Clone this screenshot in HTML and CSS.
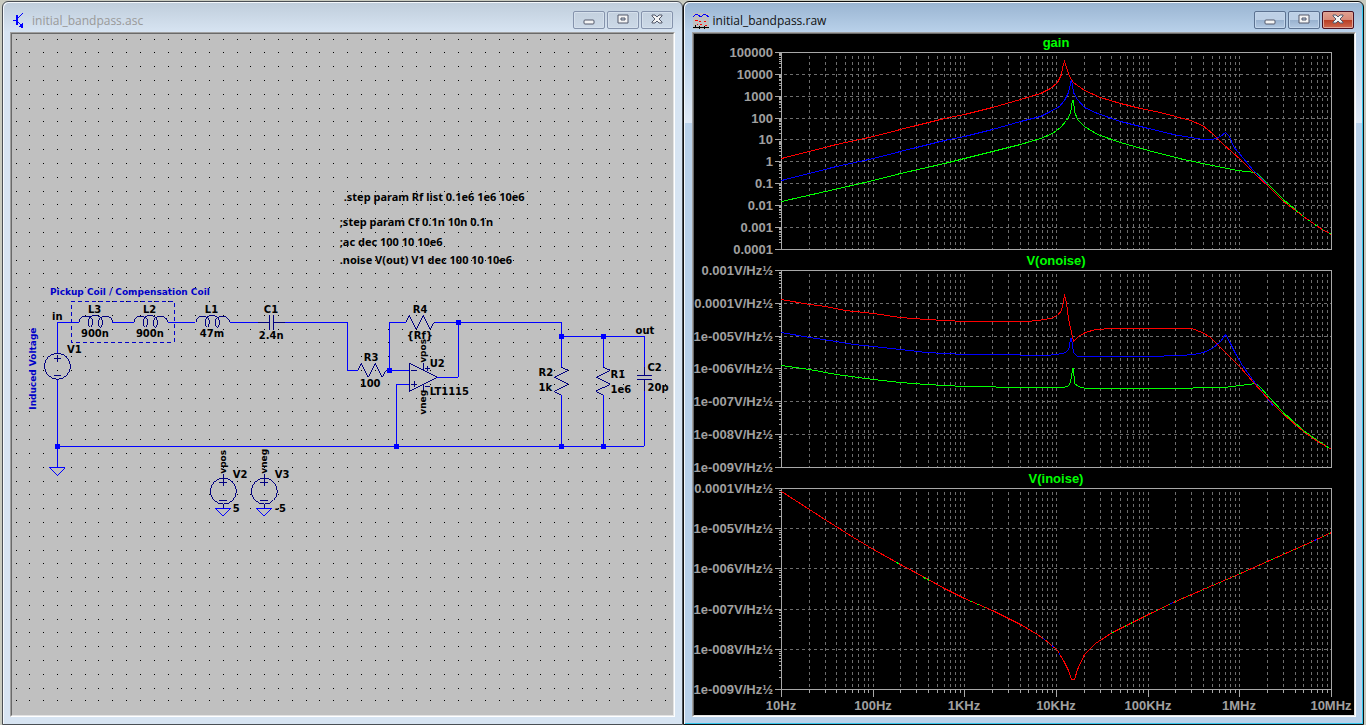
FILE: index.html
```html
<!DOCTYPE html>
<html lang="en">
<head>
  <meta charset="UTF-8" />
  <meta name="viewport" content="width=device-width, initial-scale=1.0" />
  <title>initial_bandpass</title>
  <link rel="stylesheet" href="styles.css">
</head>
<body>

  <section class="window">
    <header class="titlebar">
      <svg class="icon" width="16" height="16" viewBox="0 0 16 16">
        <path d="M1 7h4M6 5l5-5M6 9l5 5" stroke="#00f" fill="none" />
        <path d="M4 2h2v10h-2zM11 15v-5l-5 4z" fill="#00f" />
      </svg>
      <h1>initial_bandpass.asc</h1>
      <button type="button" aria-label="Minimize"><svg width="12" height="12" viewBox="0 0 12 12"><rect x="1" y="6" width="10" height="4" rx="1" /></svg></button>
      <button type="button" aria-label="Maximize"><svg width="12" height="12" viewBox="0 0 12 12"><path d="M1 1h10v8H1zM4 4v2h4V4z" /></svg></button>
      <button type="button" aria-label="Close"><svg width="12" height="12" viewBox="0 0 12 12"><path d="M1 1h3l2 2 2-2h3v1L8 5l3 3v1H8L6 7 4 9H1V8l3-3-3-3z" /></svg></button>
    </header>
    <main class="client">
      <svg class="schematic" viewBox="12 34 661 681" preserveAspectRatio="xMinYMin meet">
        <path id="dots" fill="#000" />

        <g transform="translate(.5 .5)">
          <g class="wire">
            <path d="M57 353V322H79M112 322H134M168 322H195M230 322H258M285 322H347V370H358" />
            <path d="M386 370H409M389 370V322H406M434 322H561V367M458 322V377H437" />
            <path d="M561 336H644V367M603 336V367M561 395V446M603 395V446M644 391V446" />
            <path d="M57 379V467M57 446H644M409 384H396V446" />
            <path d="M49 467H65L57 475ZM215 508H231L223 516ZM256 508H272L264 516Z" />
          </g>

          <g class="part">
            <!-- sources -->
            <circle cx="57" cy="366" r="13" />
            <circle cx="223" cy="491" r="13" />
            <circle cx="264" cy="491" r="13" />
            <path d="M54 358H61M57 355V362M54 375H61" />
            <path d="M219 482H227M223 478V486M219 500H227M223 474V478M223 504V508" />
            <path d="M260 482H268M264 478V486M260 500H268M264 474V478M264 504V508" />
            <!-- inductors -->
            <path id="coil" d="M79 322Q79 316 85 316Q92 316 92 321Q92 327 90 327Q88 327 88 322Q88 315 95 315Q102 316 102 322Q102 327 100 327Q98 327 98 322Q98 316 106 316Q112 317 112 322" />
            <use href="#coil" x="55" />
            <use href="#coil" x="117" />
            <!-- capacitors -->
            <path d="M258 322H269M269 315V330M273 315V330M273 322H285" />
            <path d="M644 367V375M637 375H652M637 379H652M644 379V391" />
            <!-- resistors -->
            <path d="M358 370L361 363L368 377L375 363L382 377L386 370" />
            <path d="M406 322L409 315L416 329L423 315L430 329L434 322" />
            <path d="M561 367L568 370L554 377L568 384L554 391L561 395" />
            <path d="M603 367L610 370L596 377L610 384L596 391L603 395" />
            <!-- op amp -->
            <path d="M409 363V391L437 377ZM411 370H417M411 384H417M414 381V387M423 363V370M423 384V391M425 368H430M427 366V371M425 386H430" />
          </g>
          <rect class="outline" x="71" y="301" width="103" height="41" />
        </g>

        <path class="node" d="M55 444h5v5h-5zM394 444h5v5h-5zM559 444h5v5h-5zM601 444h5v5h-5zM387 368h5v5h-5zM456 320h5v5h-5zM559 334h5v5h-5zM601 334h5v5h-5z" />

        <g class="label">
          <text x="52" y="320">in</text>
          <text x="88" y="313">L3</text>
          <text x="81" y="337">900n</text>
          <text x="143" y="313">L2</text>
          <text x="136" y="337">900n</text>
          <text x="205" y="313">L1</text>
          <text x="200" y="337">47m</text>
          <text x="264" y="313">C1</text>
          <text x="259" y="339">2.4n</text>
          <text x="67" y="353">V1</text>
          <text x="233" y="478">V2</text>
          <text x="275" y="478">V3</text>
          <text x="233" y="512">5</text>
          <text x="275" y="512">-5</text>
          <text x="413" y="313">R4</text>
          <text x="407" y="339">{Rf}</text>
          <text x="364" y="361">R3</text>
          <text x="360" y="387">100</text>
          <text x="430" y="367">U2</text>
          <text x="430" y="395">LT1115</text>
          <text x="539" y="376">R2</text>
          <text x="539" y="391">1k</text>
          <text x="611" y="378">R1</text>
          <text x="611" y="393">1e6</text>
          <text x="636" y="334">out</text>
          <text x="648" y="371">C2</text>
          <text x="648" y="391">20p</text>
        </g>
        <g class="directive">
          <text x="344" y="201">.step param Rf list 0.1e6 1e6 10e6</text>
          <text x="340" y="226">;step param Cf 0.1n 10n 0.1n</text>
          <text x="340" y="246">;ac dec 100 10 10e6</text>
          <text x="340" y="264">.noise V(out) V1 dec 100 10 10e6</text>
        </g>
        <g class="net">
          <text transform="translate(226 474) rotate(-90)">vpos</text>
          <text transform="translate(267 474) rotate(-90)">vneg</text>
          <text transform="translate(426 363) rotate(-90)">vpos</text>
          <text transform="translate(426 415) rotate(-90)">vneg</text>
        </g>
        <g class="net note">
          <text x="50" y="295">Pickup Coil / Compensation Coil</text>
          <text transform="translate(36 410) rotate(-90)">Induced Voltage</text>
        </g>
      </svg>
    </main>
  </section>

  <section class="window active">
    <header class="titlebar">
      <svg class="icon" width="16" height="16" viewBox="0 0 16 16">
        <rect width="16" height="16" fill="#c0c0c0" />
        <path d="M0 4l3-3h1l4 3 3-3h1l4 3" stroke="#00f" fill="none" />
        <path d="M2 7h3v1h-3zM6 8h2v1h-2zM11 8h2v1h-2zM7 11h2v1h-2zM4 11h1v1h-1zM12 12h2v1h-2z" fill="#f00" />
        <path d="M0 14h16v1h-16zM2 12h1v3h-1zM6 13h1v3h-1zM11 13h1v3h-1z" fill="#000" />
      </svg>
      <h1>initial_bandpass.raw</h1>
      <button type="button" aria-label="Minimize"><svg width="12" height="12" viewBox="0 0 12 12"><rect x="1" y="6" width="10" height="4" rx="1" /></svg></button>
      <button type="button" aria-label="Maximize"><svg width="12" height="12" viewBox="0 0 12 12"><path d="M1 1h10v8H1zM4 4v2h4V4z" /></svg></button>
      <button type="button" class="close" aria-label="Close"><svg width="12" height="12" viewBox="0 0 12 12"><path d="M1 1h3l2 2 2-2h3v1L8 5l3 3v1H8L6 7 4 9H1V8l3-3-3-3z" /></svg></button>
    </header>
    <main class="client">
      <svg class="plots" id="plots" viewBox="694 34 660 681" preserveAspectRatio="xMinYMin meet"></svg>
    </main>
  </section>

  <script src="script.js"></script>
</body>
</html>
```
FILE: styles.css
```css
* {
  box-sizing: border-box;
}
body {
  display: flex;
  height: 100vh;
  margin: 0;
  padding: 1px 2px 0;
  background: #c9cbc0;
  font-family: "Open Sans", "Noto Sans", sans-serif;
  overflow: hidden;
}

/* windows */
.window {
  flex: 1;
  min-width: 0;
  display: flex;
  flex-direction: column;
  padding: 1px 7px 7px;
  border: 1px solid #4a4f55;
  border-radius: 6px 6px 0 0;
  background: linear-gradient(#bfcddb, #d7e4f2 30px);
  box-shadow: inset 1px 1px #f4f8fc;
}
.window.active {
  padding-left: 8px;
  border-color: #111;
  background: linear-gradient(#99b4d1, #b9d1ea 30px, #b9d1ea 40px, #dfe9f6 121px, #b9d1ea 121px);
  box-shadow: inset 1px 1px #f4f8fc, inset -1px -1px #35c8ee;
}
.titlebar {
  display: flex;
  align-items: center;
  gap: 2px;
  height: 29px;
  padding: 8px 2px 3px;
}
.titlebar h1 {
  flex: 1;
  margin: 1px 0 0 2px;
  font-size: 12px;
  font-weight: normal;
  line-height: 18px;
  color: #999;
}
.active .titlebar {
  padding-left: 1px;
}
.active .titlebar h1 {
  color: #111;
}
.icon {
  position: relative;
  top: 1px;
  shape-rendering: crispEdges;
}
.titlebar button {
  display: flex;
  align-items: center;
  justify-content: center;
  width: 32px;
  height: 18px;
  padding: 0;
  border: 1px solid #8593ac;
  border-radius: 2px;
  background: linear-gradient(#c3d0de, #ccd9e7);
  box-shadow: inset 0 0 0 1px #d5e0ec;
}
.titlebar button svg {
  fill: #f4f4f4;
  fill-rule: evenodd;
  stroke: #53586a;
}
.active .titlebar button {
  border-color: #5c7291;
  background: linear-gradient(#bdd0e6 50%, #98b1ce 50%, #b3c9e2);
  box-shadow: inset 0 0 0 1px #c2d5ea;
}
.active .titlebar .close {
  border-color: #4a1020;
  background: linear-gradient(#e0a090, #d88a78 50%, #b83c22 50%, #cf6a50);
  box-shadow: inset 0 0 0 1px #e0a597;
}

/* sunken client area */
.client {
  flex: 1;
  min-height: 0;
  border: 1px solid;
  border-color: #a0a0a0 #fff #fff #a0a0a0;
}
.client svg {
  display: block;
  width: 100%;
  height: 100%;
  border: 1px solid;
  border-color: #696969 #e3e3e3 #e3e3e3 #696969;
}

/* schematic */
.schematic {
  background: #c0c0c0;
  shape-rendering: crispEdges;
}
.wire {
  fill: none;
  stroke: #00f;
}
.part {
  fill: none;
  stroke: #000080;
}
.node {
  fill: #00f;
}
.outline {
  fill: none;
  stroke: #0000c8;
  stroke-dasharray: 4 3;
}
.label {
  font: bold 10px "DejaVu Sans", sans-serif;
  fill: #000;
}
.directive {
  font: bold 11px "Noto Sans", sans-serif;
  fill: #000;
}
.net {
  font: bold 9px "DejaVu Sans", sans-serif;
  fill: #000;
}
.note {
  fill: #0000c8;
}

/* waveform panes */
.plots {
  background: #000;
  shape-rendering: crispEdges;
}
.frame {
  fill: none;
  stroke: #a8a8a8;
}
.grid {
  fill: none;
  stroke: #6e6e6e;
  stroke-dasharray: 3 3;
}
.trace {
  fill: none;
}
.axis {
  font: bold 13px "Liberation Sans", Arial, sans-serif;
  fill: #a0a0a0;
}
.axis.end {
  text-anchor: end;
}
.axis.mid {
  text-anchor: middle;
}
.name {
  font: bold 13px "Liberation Sans", Arial, sans-serif;
  fill: #0f0;
  text-anchor: middle;
}
```
FILE: script.js
```js
const RED = '#f00';
const BLUE = '#00f';
const GREEN = '#0f0';

const LEFT = 781;
const RIGHT = 1331;
const freqs = ['10Hz', '100Hz', '1KHz', '10KHz', '100KHz', '1MHz', '10MHz'];

const panes = [
  {
    name: 'gain', top: 52, bottom: 249,
    ticks: ['100000', '10000', '1000', '100', '10', '1', '0.1', '0.01', '0.001', '0.0001'],
    traces: [
      [GREEN, '781,201 825,191 873,180 900,173 944,163 964,158 992,151 1020,144 1040,138 1052,133 1060,127 1066,120 1070,113 1071,106 1072,100 1073,100 1074,111 1077,119 1084,126 1097,134 1120,142 1148,150 1183,159 1212,165 1237,170 1255,172 1260,176 1270,186 1283,199 1303,216 1320,228 1331,234'],
      [BLUE, '781,180 836,166 873,158 900,151 944,140 964,136 992,129 1020,121 1040,116 1050,111 1059,106 1064,100 1068,92 1070,83 1071,79 1073,92 1077,99 1084,107 1097,113 1120,121 1148,128 1173,134 1190,137 1203,139 1212,139 1220,136 1225,132 1229,136 1233,146 1242,157 1253,170 1258,175 1270,188'],
      [RED, '781,158 836,144 873,136 900,129 944,118 964,114 992,107 1020,99 1040,93 1050,88 1057,82 1061,74 1062,67 1064,61 1066,67 1069,76 1073,82 1084,90 1100,97 1120,103 1140,108 1160,112 1190,120 1202,125 1212,133 1223,144 1240,159 1253,172 1270,188 1283,201 1303,216 1320,228 1331,234'],
      [GREEN, '1283,200 1303,216 1320,228 1331,234', '2 6']
    ]
  },
  {
    name: 'V(onoise)', top: 270, bottom: 467,
    ticks: ['0.001V/Hz½', '0.0001V/Hz½', '1e-005V/Hz½', '1e-006V/Hz½', '1e-007V/Hz½', '1e-008V/Hz½', '1e-009V/Hz½'],
    traces: [
      [GREEN, '781,365 809,369 836,374 873,379 900,382 926,384 964,386 1026,387 1063,387 1069,385 1071,377 1072,368 1073,368 1074,383 1078,386 1085,388 1190,388 1195,387 1223,387 1240,385 1255,383 1259,386 1268,396 1283,412 1303,430 1317,440 1331,449'],
      [BLUE, '781,332 809,337 836,341 853,344 873,346 900,349 926,352 964,354 1013,354 1026,355 1047,355 1062,353 1067,351 1069,346 1070,338 1071,338 1073,352 1077,356 1148,356 1180,355 1193,354 1203,352 1212,348 1220,341 1225,334 1230,343 1235,353 1242,365 1255,383 1273,406'],
      [RED, '781,299 809,304 825,306 845,310 873,313 900,317 926,319 964,321 1026,321 1037,320 1050,318 1057,315 1061,310 1063,301 1064,294 1066,303 1068,318 1071,332 1073,341 1078,336 1085,332 1095,329 1112,328 1191,328 1202,332 1210,337 1217,344 1228,355 1240,367 1253,382 1270,401 1283,414 1303,431 1317,441 1331,449'],
      [GREEN, '1283,413 1303,430 1317,440 1331,449', '3 6']
    ]
  },
  {
    name: 'V(inoise)', top: 488, bottom: 689,
    ticks: ['0.0001V/Hz½', '1e-005V/Hz½', '1e-006V/Hz½', '1e-007V/Hz½', '1e-008V/Hz½', '1e-009V/Hz½'],
    traces: [
      [RED, '781,491 809,509 826,520 853,537 873,549 900,564 926,578 944,588 964,598 992,610 1020,624 1037,634 1048,642 1057,650 1063,660 1068,670 1071,679 1074,679 1077,669 1084,654 1095,643 1112,632 1148,614 1175,601 1212,585 1240,573 1267,561 1303,545 1331,532'],
      [GREEN, '896,562 900,564', '3 3'],
      [GREEN, '923,577 929,580', '3 1'],
      [GREEN, '970,601 987,608', '2 5'],
      [GREEN, '1112,632 1148,614 1175,601 1212,585 1240,573 1267,561 1303,545 1331,532', '1 6'],
      [BLUE, '1043,638 1048,642 1057,650 1063,660', '2 9'],
      [BLUE, '1170,603 1175,601', '3 3'],
      [BLUE, '1314,540 1320,537', '3 3']
    ]
  }
];

function gridDots() {
  let d = '';
  for (let row = 0; row < 49; row++) {
    for (let col = 0; col < 48; col++) {
      const x = Math.floor(16.1 + 13.81 * col);
      const y = Math.floor(39.1 + 13.81 * row);
      d += `M${x} ${y}h1v1h-1z`;
    }
  }
  return d;
}

function drawPane(pane, last) {
  const { top, bottom } = pane;
  const decade = (RIGHT - LEFT) / 6;
  const step = (bottom - top) / (pane.ticks.length - 1);
  let grid = '';
  let frame = `M${LEFT} ${top}H${RIGHT}V${bottom}H${LEFT}Z`;
  let text = `<text class="name" x="1056" y="${top - 5}">${pane.name}</text>`;

  for (let i = 0; i < 6; i++) {
    for (let n = 2; n <= 10; n++) {
      const x = Math.round(LEFT + decade * (i + Math.log10(n)));
      if (x < RIGHT) grid += `M${x} ${top + 3}V${bottom}`;
      if (last) frame += `M${x} ${bottom}v${n === 10 ? 7 : 3}`;
    }
  }
  if (last) frame += `M${LEFT} ${bottom}v7`;

  pane.ticks.forEach((label, i) => {
    const y = Math.floor(top + step * i + 0.4);
    frame += `M${LEFT - 7} ${y}H${LEFT}`;
    text += `<text class="axis end" x="773" y="${y + 5}">${label}</text>`;
    if (i === pane.ticks.length - 1) return;
    if (i > 0) grid += `M${LEFT + 2} ${y}H${RIGHT}`;
    for (let n = 2; n < 10; n++) {
      frame += `M${LEFT - 3} ${Math.round(top + step * (i + 1 - Math.log10(n)))}h3`;
    }
  });

  const traces = pane.traces.map(([color, points, dash]) =>
    `<polyline class="trace" stroke="${color}" points="${points}" stroke-dasharray="${dash || 'none'}" />`
  ).join('');

  return `<g transform="translate(.5 .5)">
    <path class="grid" d="${grid}" />
    <path class="frame" d="${frame}" />
    ${traces}
  </g>${text}`;
}

document.getElementById('dots').setAttribute('d', gridDots());

let svg = panes.map((pane, i) => drawPane(pane, i === panes.length - 1)).join('');
freqs.forEach((label, i) => {
  const x = Math.round(LEFT + (RIGHT - LEFT) * i / 6);
  svg += `<text class="axis mid" x="${x}" y="710">${label}</text>`;
});
document.getElementById('plots').innerHTML = svg;
```
